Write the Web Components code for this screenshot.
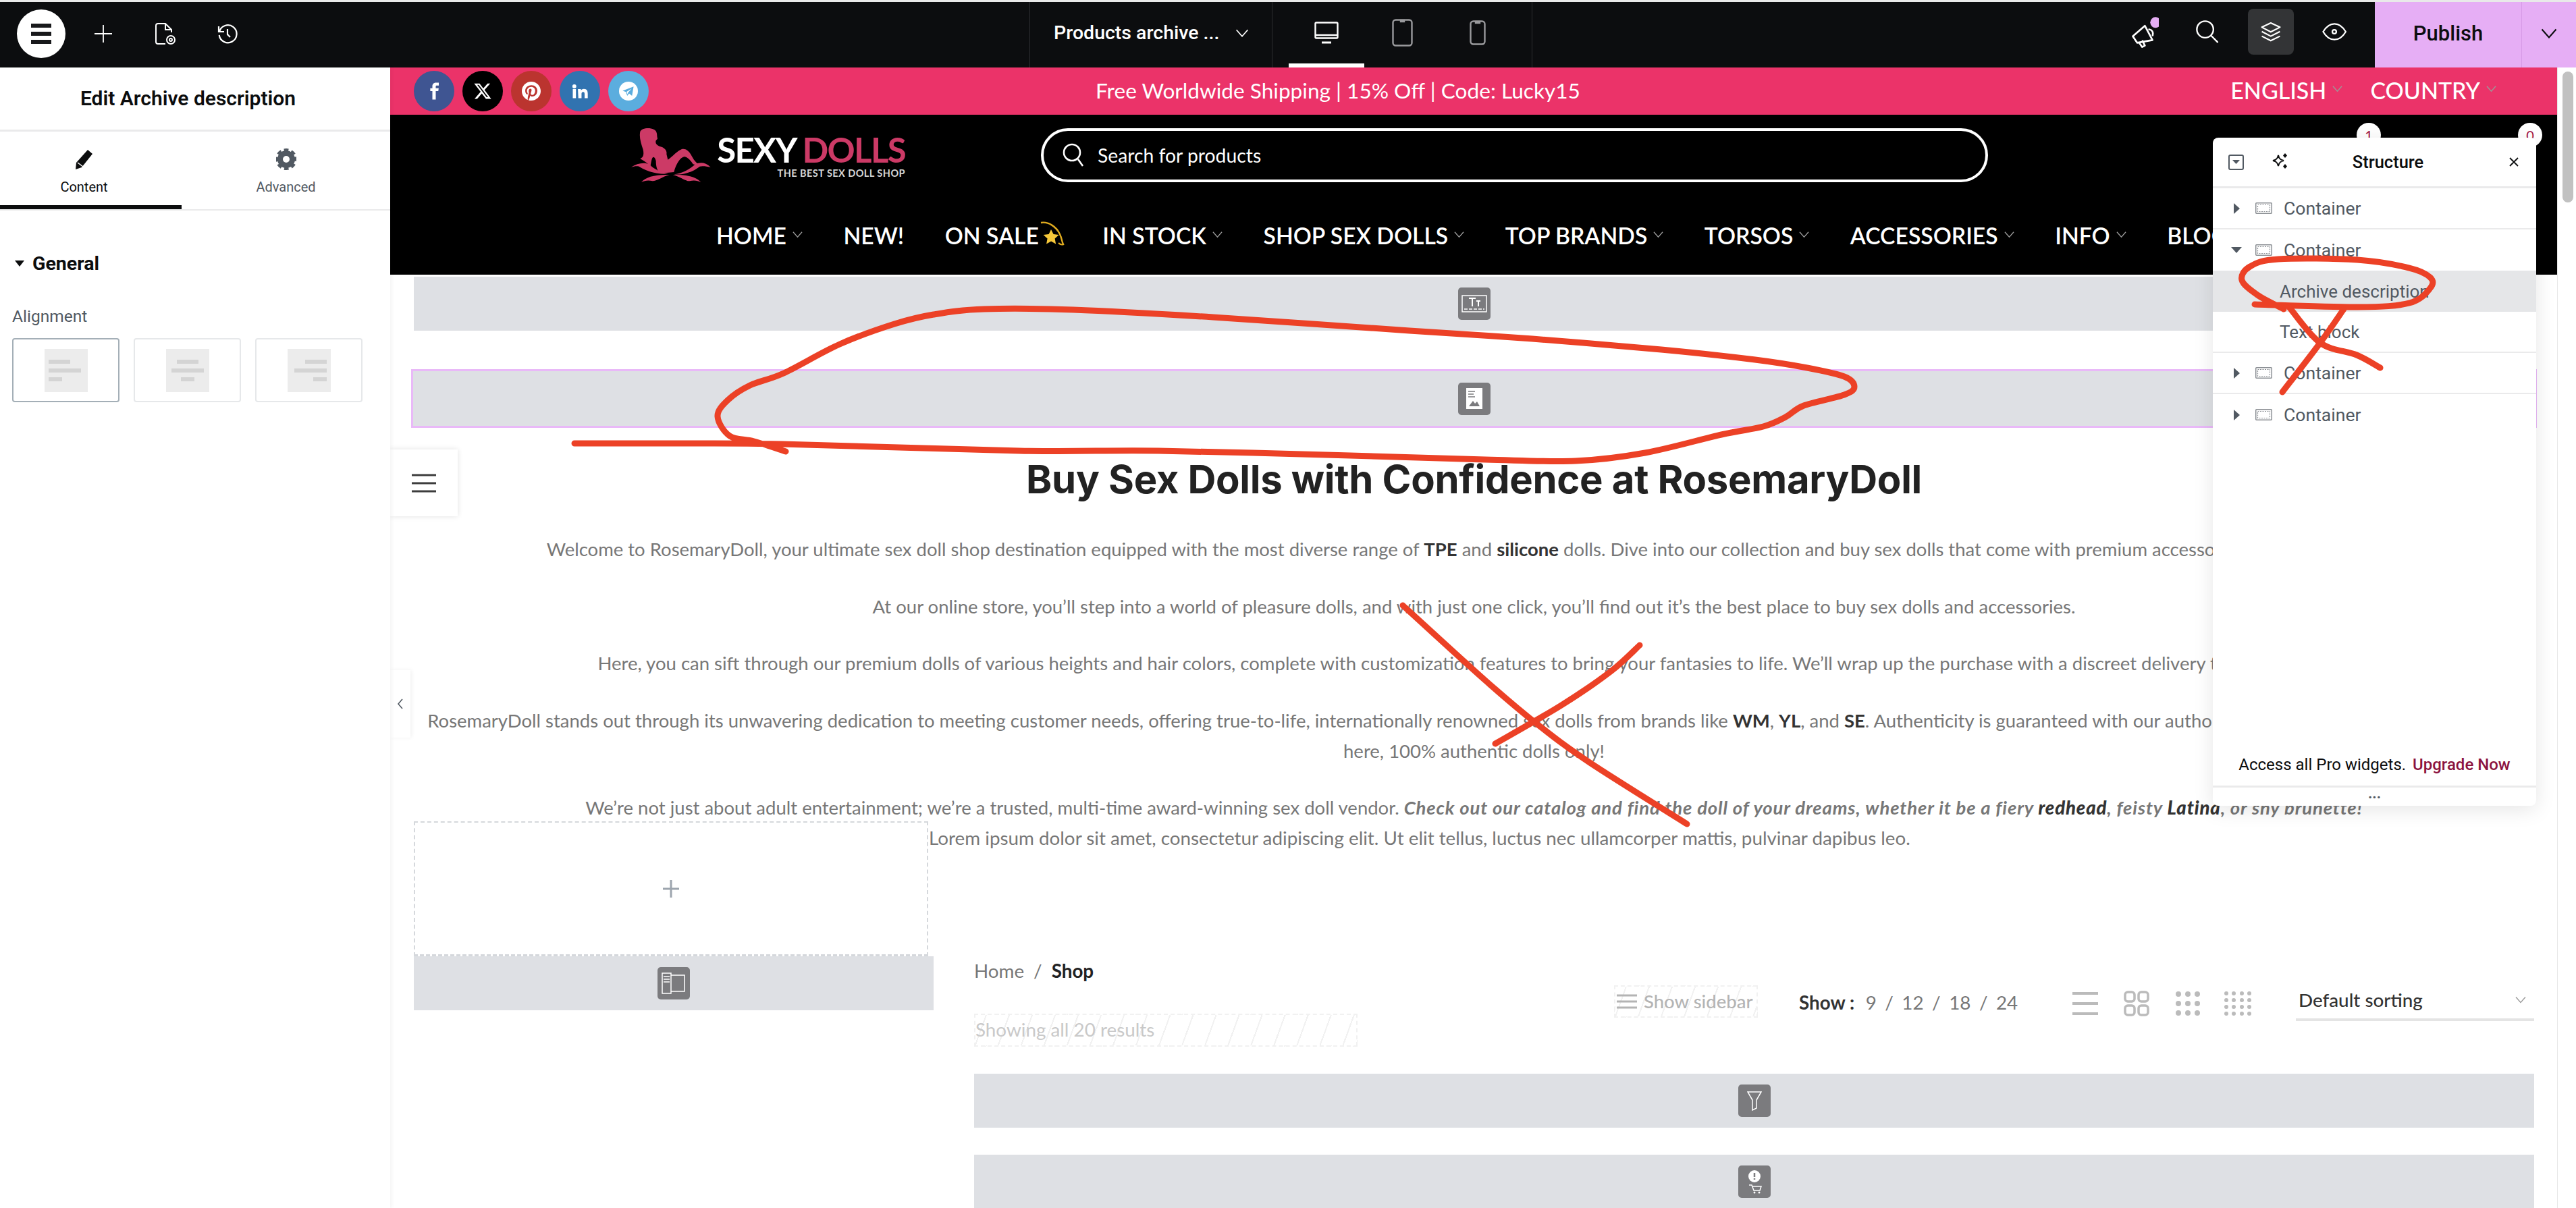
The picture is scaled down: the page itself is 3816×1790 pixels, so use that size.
<!DOCTYPE html>
<html lang="en">
<head>
<meta charset="utf-8">
<title>Edit Archive description</title>
<style>
    html, body { margin: 0; padding: 0; height: 100%; overflow: hidden; background: #fff; }
</style>
</head>
<body>
<editor-app></editor-app>

<script>
// Iconos compartidos
const ICONS = {
    chevron: '<svg viewBox="0 0 16 10" width="100%" height="100%" style="display:block" fill="none" stroke="currentColor" stroke-width="1.4"><path d="M1 1l7 8 7-8"/></svg>',
    containerBox: '<svg viewBox="0 0 25 17" width="25" height="17" fill="none"><rect x=".75" y=".75" width="23.5" height="15.5" rx="1" stroke="#8b8f94" stroke-width="1.5"/><rect x="3.5" y="3.5" width="18" height="10" stroke="#8b8f94" stroke-width="1.2" stroke-dasharray="2 1.5"/></svg>'
};

// Barra superior del editor
class EditorTopbar extends HTMLElement {
    constructor() {
        super();
        this.attachShadow({ mode: 'open' });
    }

    connectedCallback() {
        this.shadowRoot.innerHTML = `
            <style>
                :host { display: flex; height: 97px; background: #0c0d0f; color: #fff; font-family: Roboto, sans-serif; }
                .left { flex: 0 0 1525px; display: flex; align-items: center; box-sizing: border-box; padding-left: 25px; }
                .menu { width: 72px; height: 72px; border-radius: 50%; background: #fff; display: flex; flex-direction: column; align-items: center; justify-content: center; gap: 6px; margin-top: -3px; }
                .menu i { width: 30px; height: 6px; background: #18191b; display: block; }
                .tool { width: 40px; height: 40px; margin-left: 52px; display: flex; align-items: center; justify-content: center; margin-top: -3px; }
                .menu + .tool { margin-left: 36px; }
                .selector { flex: 0 0 359px; box-sizing: border-box; border-left: 1px solid #2c2d30; display: flex; align-items: center; padding-left: 35px; font-size: 28.5px; font-weight: 500; padding-bottom: 6px; }
                .selector span { flex: 0 0 240px; white-space: nowrap; }
                .selector b { width: 20px; height: 12px; margin-left: 24px; display: block; color: #fff; }
                .devices { flex: 0 0 386px; box-sizing: border-box; border-left: 1px solid #2c2d30; border-right: 1px solid #2c2d30; display: flex; padding-left: 24px; }
                .device { width: 112px; display: flex; align-items: center; justify-content: center; padding-bottom: 6px; box-sizing: border-box; }
                .device.active { border-bottom: 6px solid #fff; padding-bottom: 0; }
                .right { flex: 1; display: flex; justify-content: flex-end; }
                .actions { display: flex; align-items: center; gap: 26px; margin-right: 26px; padding-bottom: 9px; }
                .action { width: 68px; height: 68px; border-radius: 8px; display: flex; align-items: center; justify-content: center; }
                .action.on { background: #333436; }
                .publish { display: flex; background: #e6aef5; color: #0c0d0f; height: 97px; }
                .publish span { width: 218px; display: flex; align-items: center; justify-content: center; font-size: 31px; font-weight: 500; border-right: 1px solid #d69be6; padding-bottom: 4px; box-sizing: border-box; }
                .publish b { width: 80px; display: flex; align-items: center; justify-content: center; padding-bottom: 4px; }
                .publish b i { width: 26px; height: 15px; display: block; }
            </style>
            <div class="left">
                <div class="menu"><i></i><i></i><i></i></div>
                <div class="tool"><svg width="26" height="26" viewBox="0 0 26 26" stroke="#fff" stroke-width="1.8"><path d="M13 0v26M0 13h26"/></svg></div>
                <div class="tool"><svg width="32" height="34" viewBox="0 0 32 34" fill="none" stroke="#fff" stroke-width="2"><path d="M16 32H5a3 3 0 0 1-3-3V5a3 3 0 0 1 3-3h11l9 9v4"/><path d="M16 2v9h9"/><circle cx="24" cy="26" r="6"/><circle cx="24" cy="26" r="2"/></svg></div>
                <div class="tool"><svg width="32" height="32" viewBox="0 0 32 32" fill="none" stroke="#fff" stroke-width="2.2"><path d="M4 13a13 13 0 1 1-.3 5"/><path d="M3 5v8h8"/><path d="M16 9v8l4 4"/></svg></div>
            </div>
            <div class="selector"><span>Products archive ...</span><b>${ICONS.chevron}</b></div>
            <div class="devices">
                <div class="device active"><svg width="36" height="33" viewBox="0 0 36 33" fill="none" stroke="#fff" stroke-width="2.4"><rect x="1.5" y="1.5" width="33" height="23" rx="1.5"/><path d="M1.5 20h33"/><path d="M11 31h14" stroke-width="3"/></svg></div>
                <div class="device"><svg width="31" height="41" viewBox="0 0 31 41" fill="none" stroke="#9a9a9d" stroke-width="2.4"><rect x="1.5" y="1.5" width="28" height="38" rx="4"/><path d="M13 2h5v2h-5z"/></svg></div>
                <div class="device"><svg width="24" height="37" viewBox="0 0 24 37" fill="none" stroke="#9a9a9d" stroke-width="2.4"><rect x="1.5" y="1.5" width="21" height="34" rx="4"/><path d="M9 2h6v2H9z"/></svg></div>
            </div>
            <div class="right">
                <div class="actions">
                    <div class="action"><svg width="44" height="48" viewBox="20 35 120 145" fill="none" stroke="#fff" stroke-width="8" stroke-linejoin="round" stroke-linecap="round"><path d="M30 128l54-47 34 64-68 12z"/><path d="M58 156l14 20 12-6-10-21"/><path d="M103 97c14 2 20 14 16 27"/><circle cx="132" cy="66" r="24" fill="#e6aef5" stroke="none"/></svg></div>
                    <div class="action"><svg width="34" height="36" viewBox="310 75 100 100" fill="none" stroke="#fff" stroke-width="7" stroke-linecap="round"><circle cx="350" cy="115" r="36"/><path d="M376 142l28 28"/></svg></div>
                    <div class="action on"><svg width="30" height="30" viewBox="595 80 95 92" fill="none" stroke="#fff" stroke-width="7" stroke-linejoin="round"><path d="M600 105l42-20 43 20-43 22z"/><path d="M600 125l42 22 43-22"/><path d="M600 147l42 21 43-21"/></svg></div>
                    <div class="action"><svg width="36" height="26" viewBox="868 85 110 80" fill="none" stroke="#fff" stroke-width="7" stroke-linejoin="round"><path d="M872 125c28-48 75-48 103 0-28 48-75 48-103 0z"/><circle cx="923" cy="125" r="9"/></svg></div>
                </div>
                <div class="publish"><span>Publish</span><b><i>${ICONS.chevron}</i></b></div>
            </div>
        `;
    }
}

// Opción de alineación (izquierda, centro, derecha)
class AlignOption extends HTMLElement {
    constructor() {
        super();
        this.attachShadow({ mode: 'open' });
    }

    connectedCallback() {
        const mode = this.getAttribute('mode');
        const justify = { left: 'flex-start', center: 'center', right: 'flex-end' }[mode];
        this.shadowRoot.innerHTML = `
            <style>
                :host { display: flex; align-items: center; justify-content: center; width: 159px; height: 95px; box-sizing: border-box; border: 2px solid ${this.hasAttribute('active') ? '#a4afb7' : '#e6e8ea'}; border-radius: 4px; }
                .page { width: 64px; height: 64px; background: #ececec; box-sizing: border-box; padding: 16px 6px 0; display: flex; flex-direction: column; gap: 7px; align-items: ${justify}; }
                i { display: block; height: 6px; background: #d4d4d4; }
            </style>
            <div class="page"><i style="width:32px"></i><i style="width:48px"></i><i style="width:20px"></i></div>
        `;
    }
}

// Panel lateral izquierdo
class EditPanel extends HTMLElement {
    constructor() {
        super();
        this.attachShadow({ mode: 'open' });
    }

    connectedCallback() {
        this.shadowRoot.innerHTML = `
            <style>
                :host { display: block; flex: 0 0 578px; height: 100%; background: #fff; font-family: Roboto, sans-serif; color: #0c0d0e; position: relative; z-index: 2; box-shadow: 2px 0 6px rgba(0,0,0,.05); }
                .title { height: 92px; border-bottom: 3px solid #eaeaeb; font-size: 30px; font-weight: 600; text-align: center; line-height: 92px; padding-right: 21px; white-space: nowrap; }
                .tabs { display: flex; height: 115px; border-bottom: 2px solid #eaeaeb; }
                .tab { flex: 0 0 269px; display: flex; flex-direction: column; align-items: center; box-sizing: border-box; height: 115px; padding-top: 25px; padding-right: 20px; font-size: 20px; color: #3f444b; }
                .tab + .tab { flex: 0 0 309px; color: #515962; padding-right: 0; }
                .tab.active { border-bottom: 6px solid #0c0d0e; color: #0c0d0e; }
                .tab svg { height: 32px; margin-bottom: 13px; display: block; }
                .section { padding: 62px 18px 0; }
                .general { display: flex; align-items: center; font-size: 28.5px; font-weight: 700; height: 32px; margin-left: 4px; }
                .general::before { content: ''; border-left: 7px solid transparent; border-right: 7px solid transparent; border-top: 9px solid #0c0d0e; margin-right: 12px; }
                .label { margin-top: 47px; font-size: 24.5px; color: #515962; line-height: 32px; }
                .aligns { display: flex; gap: 21px; margin-top: 16px; }
            </style>
            <div class="title">Edit Archive description</div>
            <div class="tabs">
                <div class="tab active"><svg width="28" height="32" viewBox="0 0 28 32"><path d="M19 2l7 6-16 20-9 3 1-10z" fill="#0c0d0e"/><path d="M4 21l8 6" stroke="#fff" stroke-width="1.5"/></svg>Content</div>
                <div class="tab"><svg width="30" height="32" viewBox="0 0 30 32"><circle cx="15" cy="16" r="9" fill="none" stroke="#515962" stroke-width="8"/><circle cx="15" cy="16" r="14" fill="none" stroke="#515962" stroke-width="4" stroke-dasharray="6.5 4.5" transform="rotate(-15 15 16)"/></svg>Advanced</div>
            </div>
            <div class="section">
                <div class="general">General</div>
                <div class="label">Alignment</div>
                <div class="aligns">
                    <align-option mode="left" active></align-option>
                    <align-option mode="center"></align-option>
                    <align-option mode="right"></align-option>
                </div>
            </div>
        `;
    }
}

// Elemento del menú de la tienda
class NavItem extends HTMLElement {
    constructor() {
        super();
        this.attachShadow({ mode: 'open' });
    }

    connectedCallback() {
        const arrow = this.hasAttribute('arrow') ? `<b>${ICONS.chevron}</b>` : '';
        this.shadowRoot.innerHTML = `
            <style>
                :host { display: inline-flex; align-items: center; white-space: nowrap; }
                b { display: block; width: 15px; height: 11px; margin-left: 9px; color: #9a9a9a; margin-top: -4px; }
            </style>
            <slot></slot>${arrow}
        `;
    }
}

// Cabecera de la tienda
class SiteHeader extends HTMLElement {
    constructor() {
        super();
        this.attachShadow({ mode: 'open' });
    }

    connectedCallback() {
        this.shadowRoot.innerHTML = `
            <style>
                :host { display: block; font-family: Lato, sans-serif; color: #fff; position: relative; }
                .promo { height: 70px; background: #eb3369; display: flex; align-items: center; padding-left: 35px; }
                .social { display: flex; gap: 12px; flex: 0 0 348px; }
                .social span { width: 60px; height: 60px; border-radius: 50%; display: flex; align-items: center; justify-content: center; }
                .text { flex: 0 0 2042px; text-align: center; font-size: 31.6px; white-space: nowrap; padding-bottom: 3px; }
                .lang { flex: 1; display: flex; justify-content: flex-end; gap: 41px; font-size: 34px; font-weight: 500; padding: 0 90px 3px 0; }
                .bar { height: 237px; background: #000; }
                .row { display: flex; padding: 5px 0 0 352px; height: 100px; box-sizing: content-box; }
                .logo { flex: 0 0 612px; position: relative; display: flex; }
                .logo svg { display: block; }
                .brand { margin-left: -69px; width: 280px; padding-top: 24px; font-weight: 700; text-align: right; }
                .brand div { font-size: 51px; line-height: 46px; letter-spacing: -1.7px; white-space: nowrap; }
                .brand em { font-style: normal; color: #cc3a66; }
                .brand small { display: block; font-size: 14.5px; line-height: 18px; margin-top: 3px; color: #d6d6d6; white-space: nowrap; letter-spacing: .45px; }
                .search { width: 1403px; height: 80px; margin-top: 15px; box-sizing: border-box; border: 4px solid #fff; border-radius: 40px; display: flex; align-items: center; padding-left: 28px; font-size: 28.3px; }
                .search svg { margin-right: 20px; }
                .nav { display: flex; gap: 60.5px; padding-left: 483px; margin-top: 52px; font-size: 33.7px; font-weight: 600; line-height: 44px; white-space: nowrap; overflow: hidden; }
                .star { margin-left: 0; margin-top: -6px; }
                .badge { position: absolute; top: 82px; width: 36px; height: 36px; border-radius: 50%; background: #fff; color: #a3123f; font-size: 20px; text-align: center; line-height: 36px; }
            </style>
            <div class="promo">
                <div class="social">
                    <span style="background:#3f5592"><svg width="30" height="30" viewBox="0 0 24 24" fill="#fff"><path d="M14 8.5V6.5c0-.9.6-1.1 1-1.1h2.6V2h-3.2C11.2 2 10 4 10 6.2v2.3H7.5V12H10v10h4V12h3l.5-3.5z"/></svg></span>
                    <span style="background:#000"><svg width="28" height="28" viewBox="0 0 24 24" fill="#fff"><path d="M18.244 2.25h3.308l-7.227 8.26 8.502 11.24H16.17l-5.214-6.817L4.99 21.75H1.68l7.73-8.835L1.254 2.25H8.08l4.713 6.231zm-1.161 17.52h1.833L7.084 4.126H5.117z"/></svg></span>
                    <span style="background:#bb342f"><svg width="28" height="28" viewBox="0 0 24 24" fill="#fff"><path d="M12 0C5.373 0 0 5.372 0 12c0 5.084 3.163 9.426 7.627 11.174-.105-.949-.2-2.405.042-3.441.218-.937 1.407-5.965 1.407-5.965s-.359-.719-.359-1.782c0-1.668.967-2.914 2.171-2.914 1.023 0 1.518.769 1.518 1.69 0 1.029-.655 2.568-.994 3.995-.283 1.194.599 2.169 1.777 2.169 2.133 0 3.772-2.249 3.772-5.495 0-2.873-2.064-4.882-5.012-4.882-3.414 0-5.418 2.561-5.418 5.207 0 1.031.397 2.138.893 2.738a.36.36 0 0 1 .083.345l-.333 1.36c-.053.22-.174.267-.402.161-1.499-.698-2.436-2.889-2.436-4.649 0-3.785 2.75-7.262 7.929-7.262 4.163 0 7.398 2.967 7.398 6.931 0 4.136-2.607 7.464-6.227 7.464-1.216 0-2.359-.631-2.75-1.378l-.748 2.853c-.271 1.043-1.002 2.35-1.492 3.146C9.57 23.812 10.763 24 12 24c6.627 0 12-5.373 12-12 0-6.628-5.373-12-12-12z"/></svg></span>
                    <span style="background:#3173b0"><svg width="28" height="28" viewBox="0 0 24 24" fill="#fff"><path d="M4.98 3.5a2.5 2.5 0 1 1 0 5 2.5 2.5 0 0 1 0-5zM3 9.5h4V21H3zM9.5 9.5h3.8v1.6c.6-1 1.9-1.9 3.8-1.9 4 0 4.9 2.6 4.9 6V21h-4v-5.1c0-1.2 0-2.9-1.8-2.9s-2.1 1.4-2.1 2.8V21h-4z"/></svg></span>
                    <span style="background:#5badde"><svg width="28" height="28" viewBox="0 0 24 24"><circle cx="12" cy="12" r="12" fill="#fff"/><path d="M18.5 6.2 4.6 11.6l4.2 1.5 1.6 5 2.4-3 3.7 2.8zM9.6 12.9l6.4-4-4.6 5-.4 2.4z" fill="#5badde"/></svg></span>
                </div>
                <div class="text">Free Worldwide Shipping | 15% Off | Code: Lucky15</div>
                <div class="lang">
                    <nav-item arrow>ENGLISH</nav-item>
                    <nav-item arrow>COUNTRY</nav-item>
                </div>
            </div>
            <div class="bar">
                <div class="row">
                    <div class="logo">
                        <svg width="200" height="110" viewBox="0 0 600 330" fill="#cc3a66">
                            <path d="M55 60C60 45 95 40 115 50 128 55 130 68 130 80L132 92 125 100C122 110 125 118 140 125 165 130 175 145 172 160L178 185C200 170 220 145 240 138 260 133 275 150 285 170 295 190 310 205 330 215L290 205C285 195 265 170 250 172 235 175 215 200 205 240L150 245C130 240 125 215 125 190 120 170 110 165 105 190L100 215C90 200 70 190 55 180 70 175 72 160 68 140 58 110 50 85 55 60Z"/>
                            <path d="M15 218C40 200 75 195 95 205 115 225 140 240 180 248 130 252 80 235 50 215 40 212 25 215 15 218Z"/>
                            <path d="M368 218C345 195 320 195 300 205 280 225 245 245 205 250 250 255 295 235 320 215 335 212 350 215 368 218Z"/>
                            <path d="M60 285C80 262 120 250 185 252 150 262 130 280 110 280 90 275 75 278 60 285Z"/>
                            <path d="M325 285C305 262 265 250 200 252 235 262 255 280 275 280 295 275 310 278 325 285Z"/>
                        </svg>
                        <div class="brand"><div>SEXY <em>DOLLS</em></div><small>THE BEST SEX DOLL SHOP</small></div>
                    </div>
                    <div class="search">
                        <svg width="32" height="36" viewBox="0 0 32 36" fill="none" stroke="#fff" stroke-width="2.6"><circle cx="14" cy="14" r="12"/><path d="M23 24l7 10"/></svg>
                        Search for products
                    </div>
                </div>
                <div class="nav">
                    <nav-item arrow>HOME</nav-item>
                    <nav-item>NEW!</nav-item>
                    <nav-item style="margin-right:-4px">ON SALE<svg class="star" width="38" height="36" viewBox="0 0 38 36"><path d="M3 2c11-2 23 6 28 17 3 6 3 11 5 15-3 1-5 0-7-2" fill="none" stroke="#e0ab1f" stroke-width="2.4"/><path d="M18 12l3.600 7 8 1-6 5.500 1.500 8-7-4-7 4 1.500-8-6-5.500 8-1z" fill="#f6c83a"/></svg></nav-item>
                    <nav-item arrow>IN STOCK</nav-item>
                    <nav-item arrow>SHOP SEX DOLLS</nav-item>
                    <nav-item arrow>TOP BRANDS</nav-item>
                    <nav-item arrow>TORSOS</nav-item>
                    <nav-item arrow>ACCESSORIES</nav-item>
                    <nav-item arrow>INFO</nav-item>
                    <nav-item>BLOG</nav-item>
                </div>
            </div>
            <div class="badge" style="left:2913px">1</div>
            <div class="badge" style="left:3152px">0</div>
        `;
    }
}

// Franja gris de un widget vacío con su icono
class WidgetBar extends HTMLElement {
    constructor() {
        super();
        this.attachShadow({ mode: 'open' });
    }

    connectedCallback() {
        this.shadowRoot.innerHTML = `
            <style>
                :host { display: flex; align-items: center; justify-content: center; height: 80px; background: #dee0e4; box-sizing: border-box; }
                .icon { width: 48px; height: 48px; background: #7b7b7e; border-radius: 5px; display: flex; align-items: center; justify-content: center; }
            </style>
            <div class="icon"><slot></slot></div>
        `;
    }
}

// Contenido de la página de archivo
class ArchiveContent extends HTMLElement {
    constructor() {
        super();
        this.attachShadow({ mode: 'open' });
    }

    connectedCallback() {
        this.shadowRoot.innerHTML = `
            <style>
                :host { display: block; padding: 3px 34px 0 35px; font-family: Lato, sans-serif; color: #777; font-size: 27.8px; line-height: 45px; }
                .selected { margin: 57px -4px 0; height: 87px; border: 3px solid #e9b9f8; }
                h1 { margin: 41px 0 46px; font-family: Inter, sans-serif; font-size: 58px; font-weight: 700; letter-spacing: -.3px; line-height: 70px; color: #222; text-align: center; white-space: nowrap; }
                p { margin: 0 -30px 39.5px; text-align: center; white-space: nowrap; font-size: 27.5px; }
                p.last { margin-bottom: 0; }
                p.last i { letter-spacing: .85px; }
                strong { color: #333; }
                .columns { display: grid; grid-template-columns: 770px 1fr; column-gap: 60px; margin-top: -2px; }
                .dashed { width: 762px; height: 200px; box-sizing: border-box; border: 2px dashed #d5d8dc; border-bottom-width: 3px; display: flex; align-items: center; justify-content: center; color: #9da5ae; }
                .lorem { margin: 2px 0 0 -67px; white-space: nowrap; }
                .toolbar { display: flex; justify-content: space-between; margin-top: 155px; }
                .crumbs { line-height: 40px; display: flex; gap: 14px; }
                .crumbs b { color: #222; font-weight: 700; }
                .hatch { box-sizing: border-box; border: 2px dashed #f1f1f1; background: repeating-linear-gradient(110deg, transparent 0 14px, #f1f1f1 14px 16px, transparent 16px 32px); color: #c9c9c9; line-height: 44px; white-space: nowrap; }
                .showing { margin-top: 43px; width: 568px; height: 49px; }
                .controls { display: flex; align-items: center; height: 53px; margin-top: 41px; }
                .sidebar { width: 213px; height: 48px; display: flex; align-items: center; color: #b4b4b4; font-size: 27.5px; margin-top: -6px; font-weight: 500; }
                .sidebar svg { margin: 0 10px 0 2px; flex: none; }
                .show { margin-left: 61px; width: 405px; display: flex; gap: 12.5px; color: #777; padding-bottom: 3px; }
                .show b { color: #333; margin-right: 4px; }
                .views { display: flex; gap: 38px; align-items: center; }
                .views svg:last-child { margin-left: -4px; }
                .sort { width: 353px; height: 53px; margin-left: 65px; box-sizing: border-box; border-bottom: 4px solid #e4e4e4; padding: 0 12px 6px 4px; display: flex; align-items: center; justify-content: space-between; color: #333; font-weight: 500; }
                .sort i { width: 16px; height: 11px; color: #9a9a9a; display: block; }
                .stack { margin-top: 40px; }
            </style>
            <widget-bar><svg width="38" height="26" viewBox="0 0 38 26" fill="none" stroke="#fff" stroke-width="1.5"><rect x="1" y="1" width="36" height="24"/><path d="M11 5h10M16 5v12M22 9h6M25 9v8" stroke-width="2"/><path d="M4 21h30" stroke-dasharray="5 2"/></svg></widget-bar>
            <widget-bar class="selected"><svg width="24" height="31" viewBox="0 0 24 31"><rect width="24" height="31" fill="#fff"/><path d="M3 5h10M3 9h8M3 13h10" stroke="#7b7b7e" stroke-width="1.5"/><path d="M4 27l6-8 3 4 3-3 4 7z" fill="#7b7b7e"/></svg></widget-bar>
            <h1>Buy Sex Dolls with Confidence at RosemaryDoll</h1>
            <p>Welcome to RosemaryDoll, your ultimate sex doll shop destination equipped with the most diverse range of <strong>TPE</strong> and <strong>silicone</strong> dolls. Dive into our collection and buy sex dolls that come with premium accessories and good care kits.</p>
            <p>At our online store, you’ll step into a world of pleasure dolls, and with just one click, you’ll find out it’s the best place to buy sex dolls and accessories.</p>
            <p>Here, you can sift through our premium dolls of various heights and hair colors, complete with customization features to bring your fantasies to life. We’ll wrap up the purchase with a discreet delivery to your doorstep.</p>
            <p>RosemaryDoll stands out through its unwavering dedication to meeting customer needs, offering true-to-life, internationally renowned sex dolls from brands like <strong>WM</strong>, <strong>YL</strong>, and <strong>SE</strong>. Authenticity is guaranteed with our authorized sellers, so you can only find dolls<br>here, 100% authentic dolls only!</p>
            <p class="last">We’re not just about adult entertainment; we’re a trusted, multi-time award-winning sex doll vendor. <b><i>Check out our catalog and find the doll of your dreams, whether it be a fiery <strong>redhead</strong>, feisty <strong>Latina</strong>, or shy brunette!</i></b></p>
            <div class="columns">
                <div>
                    <div class="dashed"><svg width="28" height="28" viewBox="0 0 28 28" stroke="#9da5ae" stroke-width="3"><path d="M14 1v26M2 14h24"/></svg></div>
                    <widget-bar><svg width="36" height="32" viewBox="0 0 36 32" fill="none" stroke="#fff" stroke-width="1.5"><rect x="1" y="1" width="13" height="30"/><path d="M3 6h9M3 10h9M3 14h9"/><path d="M14 4h20v24H14"/></svg></widget-bar>
                </div>
                <div>
                    <div class="lorem">Lorem ipsum dolor sit amet, consectetur adipiscing elit. Ut elit tellus, luctus nec ullamcorper mattis, pulvinar dapibus leo.</div>
                    <div class="toolbar">
                        <div>
                            <div class="crumbs"><span>Home</span><span>/</span><b>Shop</b></div>
                            <div class="hatch showing">Showing all 20 results</div>
                        </div>
                        <div class="controls">
                            <div class="hatch sidebar"><svg width="30" height="24" viewBox="0 0 30 24" stroke="#b4b4b4" stroke-width="3"><path d="M0 3h30M0 12h30M0 21h30"/></svg>Show sidebar</div>
                            <div class="show"><b>Show :</b><span>9</span><span>/</span><span>12</span><span>/</span><span>18</span><span>/</span><span>24</span></div>
                            <div class="views">
                                <svg width="38" height="38" viewBox="0 0 38 38" stroke="#bbb" stroke-width="4"><path d="M0 4h38M0 19h38M0 34h38"/></svg>
                                <svg width="38" height="38" viewBox="0 0 38 38" fill="none" stroke="#bbb" stroke-width="3.5"><rect x="2" y="2" width="14" height="14" rx="4"/><rect x="22" y="2" width="14" height="14" rx="4"/><rect x="2" y="22" width="14" height="14" rx="4"/><rect x="22" y="22" width="14" height="14" rx="4"/></svg>
                                <svg width="38" height="38" viewBox="0 0 38 38" fill="#bbb"><circle cx="5" cy="5" r="4"/><circle cx="19" cy="5" r="4"/><circle cx="33" cy="5" r="4"/><circle cx="5" cy="19" r="4"/><circle cx="19" cy="19" r="4"/><circle cx="33" cy="19" r="4"/><circle cx="5" cy="33" r="4"/><circle cx="19" cy="33" r="4"/><circle cx="33" cy="33" r="4"/></svg>
                                <svg width="42" height="38" viewBox="0 0 42 38" fill="#bbb"><circle cx="4" cy="4" r="3"/><circle cx="15" cy="4" r="3"/><circle cx="27" cy="4" r="3"/><circle cx="38" cy="4" r="3"/><circle cx="4" cy="14" r="3"/><circle cx="15" cy="14" r="3"/><circle cx="27" cy="14" r="3"/><circle cx="38" cy="14" r="3"/><circle cx="4" cy="24" r="3"/><circle cx="15" cy="24" r="3"/><circle cx="27" cy="24" r="3"/><circle cx="38" cy="24" r="3"/><circle cx="4" cy="34" r="3"/><circle cx="15" cy="34" r="3"/><circle cx="27" cy="34" r="3"/><circle cx="38" cy="34" r="3"/></svg>
                            </div>
                            <div class="sort">Default sorting<i>${ICONS.chevron}</i></div>
                        </div>
                    </div>
                    <widget-bar class="stack"><svg width="22" height="30" viewBox="0 0 22 30" fill="none" stroke="#fff" stroke-width="1.5"><path d="M1 2h20l-7 12v12l-6 3V14z"/></svg></widget-bar>
                    <widget-bar class="stack"><svg width="30" height="36" viewBox="0 0 30 36"><circle cx="15" cy="10" r="9" fill="#fff"/><path d="M15 5v6M15 13v2" stroke="#7b7b7e" stroke-width="2.5"/><path d="M7 23h4l3 8h9l2-6H12" fill="none" stroke="#fff" stroke-width="1.5"/><circle cx="15" cy="34" r="1.5" fill="#fff"/><circle cx="22" cy="34" r="1.5" fill="#fff"/></svg></widget-bar>
                </div>
            </div>
        `;
    }
}

// Vista previa del sitio dentro del editor
class SitePreview extends HTMLElement {
    constructor() {
        super();
        this.attachShadow({ mode: 'open' });
    }

    connectedCallback() {
        this.shadowRoot.innerHTML = `
            <style>
                :host { display: flex; flex: 1; height: 100%; position: relative; overflow: hidden; background: #fff; }
                .page { flex: 1; min-width: 0; overflow: hidden; }
                .scroll { flex: 0 0 28px; box-sizing: border-box; border-left: 1px solid #e8e8e8; padding: 6px 4px 0 7px; }
                .scroll i { display: block; height: 194px; background: #c1c1c1; border-radius: 8px; }
                .tab { position: absolute; left: 0; background: #fff; box-shadow: 0 0 8px rgba(0,0,0,.12); display: flex; align-items: center; justify-content: center; }
                .burger { top: 566px; width: 100px; height: 99px; }
                .collapse { top: 893px; width: 30px; height: 100px; color: #515962; box-shadow: 2px 0 6px rgba(0,0,0,.06); }
            </style>
            <div class="page">
                <site-header></site-header>
                <archive-content></archive-content>
            </div>
            <div class="scroll"><i></i></div>
            <div class="tab burger"><svg width="36" height="28" viewBox="0 0 36 28" stroke="#3d3d3d" stroke-width="3"><path d="M0 2h36M0 14h36M0 26h36"/></svg></div>
            <div class="tab collapse"><svg width="10" height="16" viewBox="0 0 10 16" fill="none" stroke="#515962" stroke-width="1.6"><path d="M8 1L2 8l6 7"/></svg></div>
        `;
    }
}

// Fila del árbol de estructura
class TreeRow extends HTMLElement {
    constructor() {
        super();
        this.attachShadow({ mode: 'open' });
    }

    connectedCallback() {
        const state = this.getAttribute('state');
        const arrow = state === 'open'
            ? '<svg width="16" height="9" viewBox="0 0 16 9"><path d="M0 0h16L8 9z" fill="#515962"/></svg>'
            : '<svg width="9" height="16" viewBox="0 0 9 16"><path d="M0 0l9 8-9 8z" fill="#515962"/></svg>';
        this.shadowRoot.innerHTML = `
            <style>
                :host { display: flex; align-items: center; height: 61px; box-sizing: border-box; font-size: 26.6px; color: #515962; white-space: nowrap; }
                :host([state]) { border-bottom: 2px solid #eaeaeb; }
                :host([state="open"]) { border-bottom: none; }
                :host([selected]) { background: #e5e6e8; }
                .arrow { width: 16px; margin-left: 27px; display: flex; justify-content: center; }
                .icon { margin: 0 17px 0 20px; display: flex; }
                .leaf { margin-left: 99px; font-size: 26px; }
            </style>
            ${state ? `<span class="arrow">${arrow}</span><span class="icon">${ICONS.containerBox}</span><slot></slot>` : '<span class="leaf"><slot></slot></span>'}
        `;
    }
}

// Panel flotante de estructura
class StructurePanel extends HTMLElement {
    constructor() {
        super();
        this.attachShadow({ mode: 'open' });
    }

    connectedCallback() {
        this.shadowRoot.innerHTML = `
            <style>
                :host { position: absolute; left: 3278px; top: 204px; width: 479px; height: 990px; background: #fff; border-radius: 8px; box-shadow: 0 6px 30px rgba(0,0,0,.1); display: flex; flex-direction: column; font-family: Roboto, sans-serif; z-index: 3; overflow: hidden; }
                .head { flex: 0 0 72px; display: flex; align-items: center; border-bottom: 3px solid #eaeaeb; font-size: 25.5px; font-weight: 500; color: #0c0d0e; position: relative; padding-left: 23px; }
                .head .spark { margin-left: 41px; }
                .head span { position: absolute; left: 0; right: 0; text-align: center; padding-left: 40px; }
                .head .close { position: absolute; right: 26px; }
                .tree { flex: 1; }
                .promo { font-size: 24px; text-align: center; padding-bottom: 17px; color: #0c0d0e; white-space: nowrap; }
                .promo b { color: #8c1340; font-weight: 500; margin-left: 4px; }
                .dots { flex: 0 0 27px; border-top: 3px solid #eaeaeb; text-align: center; font-size: 22px; line-height: 18px; color: #515962; font-weight: 700; }
            </style>
            <div class="head">
                <svg width="23" height="23" viewBox="0 0 23 23" fill="none"><rect x="1" y="1" width="21" height="21" rx="2" stroke="#515962" stroke-width="2"/><path d="M6 8h11l-5.500 6z" fill="#515962"/></svg>
                <svg class="spark" width="26" height="26" viewBox="0 0 26 26"><path d="M10 3c1 5 3 7 8 8-5 1-7 3-8 8-1-5-3-7-8-8 5-1 7-3 8-8z" fill="none" stroke="#0c0d0e" stroke-width="2"/><path d="M20 0l3 3.500-3 3.500-3-3.500zM20 16l3 3.500-3 3.500-3-3.500z" fill="#0c0d0e"/></svg>
                <span>Structure</span>
                <svg class="close" width="14" height="14" viewBox="0 0 14 14" stroke="#0c0d0e" stroke-width="1.800"><path d="M1 1l12 12M13 1L1 13"/></svg>
            </div>
            <div class="tree">
                <tree-row state="closed">Container</tree-row>
                <tree-row state="open">Container</tree-row>
                <tree-row selected>Archive description</tree-row>
                <tree-row style="border-bottom:2px solid #eaeaeb">Text block</tree-row>
                <tree-row state="closed">Container</tree-row>
                <tree-row state="closed" style="border-bottom:none">Container</tree-row>
            </div>
            <div class="promo">Access all Pro widgets. <b>Upgrade Now</b></div>
            <div class="dots">...</div>
        `;
    }
}

// Trazos rojos dibujados a mano sobre la captura
class SketchOverlay extends HTMLElement {
    constructor() {
        super();
        this.attachShadow({ mode: 'open' });
    }

    // Curva suave que pasa por todos los puntos
    smooth(points) {
        let d = `M${points[0][0]} ${points[0][1]}`;
        for (let i = 0; i < points.length - 1; i++) {
            const p0 = points[i - 1] || points[i];
            const p1 = points[i];
            const p2 = points[i + 1];
            const p3 = points[i + 2] || p2;
            const c1 = [p1[0] + (p2[0] - p0[0]) / 6, p1[1] + (p2[1] - p0[1]) / 6];
            const c2 = [p2[0] - (p3[0] - p1[0]) / 6, p2[1] - (p3[1] - p1[1]) / 6];
            d += `C${c1[0]} ${c1[1]} ${c2[0]} ${c2[1]} ${p2[0]} ${p2[1]}`;
        }
        return d;
    }

    connectedCallback() {
        const strokes = [
            // Óvalo alrededor del widget seleccionado
            [[851, 657], [1000, 657], [1158, 658], [1510, 668], [1716, 668], [2000, 675], [2200, 681], [2334, 683], [2437, 671], [2550, 644], [2612, 632], [2645, 618], [2672, 601], [2732, 585], [2747, 573], [2732, 558], [2677, 545], [2600, 533], [2461, 518], [2270, 502], [2088, 490], [1797, 470], [1590, 459], [1458, 458], [1383, 466], [1325, 480], [1244, 510], [1161, 553], [1111, 571], [1078, 593], [1063, 617], [1081, 646], [1117, 654], [1164, 669]],
            // Equis sobre el texto
            [[2078, 897], [2200, 1008], [2277, 1073], [2355, 1130], [2499, 1221]],
            [[2429, 956], [2386, 995], [2313, 1045], [2215, 1102]],
            // Círculo en el panel de estructura
            [[3340, 451], [3492, 455], [3569, 449], [3600, 427], [3600, 411], [3569, 397], [3492, 385], [3375, 384], [3333, 395], [3321, 415], [3344, 437], [3383, 458]],
            // Equis en el panel de estructura
            [[3391, 455], [3437, 508], [3491, 526], [3526, 545]],
            [[3472, 458], [3437, 508], [3381, 581]]
        ];
        this.shadowRoot.innerHTML = `
            <style>
                :host { position: absolute; left: 0; top: 0; width: 3816px; height: 1790px; z-index: 5; pointer-events: none; display: block; }
                svg { display: block; }
            </style>
            <svg width="3816" height="1790" fill="none" stroke="#ec4126" stroke-width="9" stroke-linecap="round" stroke-linejoin="round">
                ${strokes.map(s => `<path d="${this.smooth(s)}"/>`).join('')}
            </svg>
        `;
    }
}

// Contenedor general del editor
class EditorApp extends HTMLElement {
    constructor() {
        super();
        this.attachShadow({ mode: 'open' });
    }

    connectedCallback() {
        this.shadowRoot.innerHTML = `
            <style>
                :host { display: block; position: relative; width: 3816px; height: 1790px; overflow: hidden; padding-top: 3px; box-sizing: border-box; background: #e9e9e9; }
                .body { display: flex; height: 1690px; }
            </style>
            <editor-topbar></editor-topbar>
            <div class="body">
                <edit-panel></edit-panel>
                <site-preview></site-preview>
            </div>
            <structure-panel></structure-panel>
            <sketch-overlay></sketch-overlay>
        `;
    }
}

// Registrar los componentes
customElements.define('editor-topbar', EditorTopbar);
customElements.define('align-option', AlignOption);
customElements.define('edit-panel', EditPanel);
customElements.define('nav-item', NavItem);
customElements.define('site-header', SiteHeader);
customElements.define('widget-bar', WidgetBar);
customElements.define('archive-content', ArchiveContent);
customElements.define('site-preview', SitePreview);
customElements.define('tree-row', TreeRow);
customElements.define('structure-panel', StructurePanel);
customElements.define('sketch-overlay', SketchOverlay);
customElements.define('editor-app', EditorApp);
</script>
</body>
</html>
